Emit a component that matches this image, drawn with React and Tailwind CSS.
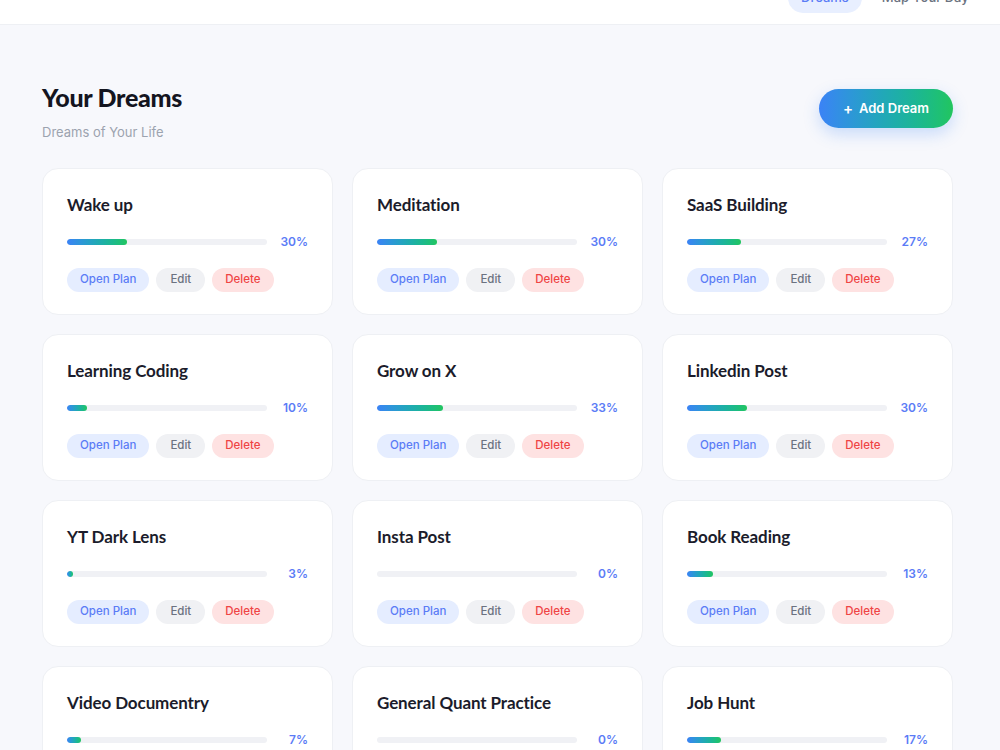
import React from "react";

const dreams = [
  { title: "Wake up", progress: 30 },
  { title: "Meditation", progress: 30 },
  { title: "SaaS Building", progress: 27 },
  { title: "Learning Coding", progress: 10 },
  { title: "Grow on X", progress: 33 },
  { title: "Linkedin Post", progress: 30 },
  { title: "YT Dark Lens", progress: 3 },
  { title: "Insta Post", progress: 0 },
  { title: "Book Reading", progress: 13 },
  { title: "Video Documentry", progress: 7 },
  { title: "General Quant Practice", progress: 0 },
  { title: "Job Hunt", progress: 17 },
];

function DreamCard({ title, progress }) {
  return (
    <div className="bg-white rounded-[16px] border border-[#eef0f4] px-[24px] pt-[24px] pb-[22px] flex flex-col">
      <h3 className="font-['Lato'] font-bold text-[17px] leading-[24px] text-[#1b1c2b] tracking-[-0.1px]">
        {title}
      </h3>
      <div className="mt-[17px] flex items-center h-[16px]">
        <div className="flex-1 h-[6px] rounded-full bg-[#f0f1f5] overflow-hidden">
          <div
            className="h-full rounded-full bg-gradient-to-r from-[#3b82f6] to-[#22c55e]"
            style={{ width: `${progress}%` }}
          />
        </div>
        <span className="w-[41px] text-right text-[12px] font-semibold text-[#5b7cf6]">
          {progress}%
        </span>
      </div>
      <div className="mt-[18px] flex gap-[7px]">
        <button className="h-[24px] px-[13px] rounded-full bg-[#e5edff] text-[#5b7cf6] text-[11.5px] font-medium">
          Open Plan
        </button>
        <button className="h-[24px] px-[14px] rounded-full bg-[#f0f1f4] text-[#6b7280] text-[11.5px] font-medium">
          Edit
        </button>
        <button className="h-[24px] px-[13px] rounded-full bg-[#fee2e2] text-[#ef4444] text-[11.5px] font-medium">
          Delete
        </button>
      </div>
    </div>
  );
}

export default function App() {
  return (
    <div className="min-h-screen bg-[#f7f8fc] font-['Inter',sans-serif] overflow-hidden">
      <header className="h-[54px] -mt-[29px] bg-white border-b border-[#eef0f4] flex items-center pl-[788px] overflow-hidden">
        <nav className="flex items-center gap-[7px] shrink-0">
          <a className="h-[30px] px-[13px] rounded-full bg-[#e8efff] text-[#5b7cf6] text-[13px] font-medium flex items-center">
            Dreams
          </a>
          <a className="h-[30px] px-[13px] rounded-full text-[#6b7280] text-[13px] font-medium flex items-center">
            Map Your Day
          </a>
          <a className="h-[30px] px-[13px] rounded-full text-[#6b7280] text-[13px] font-medium flex items-center">
            Journal
          </a>
        </nav>
      </header>

      <main className="px-[42px] pt-[56px] pb-10">
        <div className="w-[911px]">
          <div className="flex items-start justify-between">
            <div>
              <h1 className="font-['Lato'] font-black text-[25px] leading-[32px] text-[#14151f] tracking-[-0.3px]">
                Your Dreams
              </h1>
              <p className="mt-[10px] text-[13px] leading-[18px] text-[#9ca3af]">
                Dreams of Your Life
              </p>
            </div>
            <button className="mt-[8px] h-[39px] px-[24px] rounded-full bg-gradient-to-r from-[#3b82f6] to-[#22c55e] text-white text-[13px] font-semibold shadow-[0_6px_16px_rgba(59,130,246,0.25)] flex items-center gap-[6px]">
              <span className="text-[15px] leading-none">+</span>
              <span>Add Dream</span>
            </button>
          </div>

          <div className="mt-[27px] grid grid-cols-3 gap-x-[19px] gap-y-[19px]">
            {dreams.map((d) => (
              <DreamCard key={d.title} {...d} />
            ))}
          </div>
        </div>
      </main>
    </div>
  );
}
